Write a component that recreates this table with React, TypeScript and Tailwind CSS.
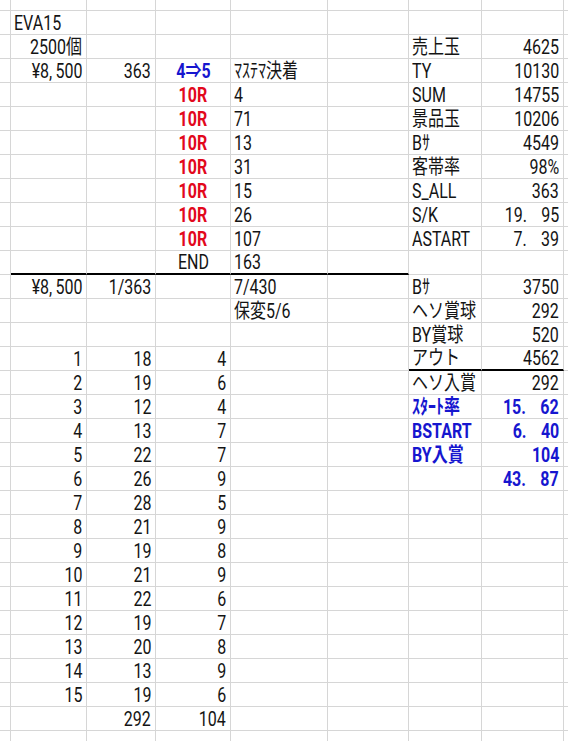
type Tone = "red" | "blue";
type Cell = { t: string; a?: "l" | "r" | "c"; tone?: Tone; thick?: boolean };

// columns: gutter, A..G, tail
const COLS = 9;

const rows: Record<number, Record<number, Cell>> = {
  1: { 1: { t: "EVA15", a: "l" } },
  2: { 1: { t: "2500個" }, 6: { t: "売上玉", a: "l" }, 7: { t: "4625" } },
  3: {
    1: { t: "¥8,500" },
    2: { t: "363" },
    3: { t: "4⇒5", a: "c", tone: "blue" },
    4: { t: "ﾏｽﾃﾏ決着", a: "l" },
    6: { t: "TY", a: "l" },
    7: { t: "10130" },
  },
  4: { 3: { t: "10R", a: "c", tone: "red" }, 4: { t: "4", a: "l" }, 6: { t: "SUM", a: "l" }, 7: { t: "14755" } },
  5: { 3: { t: "10R", a: "c", tone: "red" }, 4: { t: "71", a: "l" }, 6: { t: "景品玉", a: "l" }, 7: { t: "10206" } },
  6: { 3: { t: "10R", a: "c", tone: "red" }, 4: { t: "13", a: "l" }, 6: { t: "Bｻ", a: "l" }, 7: { t: "4549" } },
  7: { 3: { t: "10R", a: "c", tone: "red" }, 4: { t: "31", a: "l" }, 6: { t: "客帯率", a: "l" }, 7: { t: "98%" } },
  8: { 3: { t: "10R", a: "c", tone: "red" }, 4: { t: "15", a: "l" }, 6: { t: "S_ALL", a: "l" }, 7: { t: "363" } },
  9: { 3: { t: "10R", a: "c", tone: "red" }, 4: { t: "26", a: "l" }, 6: { t: "S/K", a: "l" }, 7: { t: "19.95" } },
  10: { 3: { t: "10R", a: "c", tone: "red" }, 4: { t: "107", a: "l" }, 6: { t: "ASTART", a: "l" }, 7: { t: "7.39" } },
  11: {
    1: { t: "", thick: true },
    2: { t: "", thick: true },
    3: { t: "END", a: "c", thick: true },
    4: { t: "163", a: "l", thick: true },
    5: { t: "", thick: true },
  },
  12: { 1: { t: "¥8,500" }, 2: { t: "1/363" }, 4: { t: "7/430", a: "l" }, 6: { t: "Bｻ", a: "l" }, 7: { t: "3750" } },
  13: { 4: { t: "保変5/6", a: "l" }, 6: { t: "ヘソ賞球", a: "l" }, 7: { t: "292" } },
  14: { 6: { t: "BY賞球", a: "l" }, 7: { t: "520" } },
  15: { 6: { t: "アウト", a: "l", thick: true }, 7: { t: "4562", thick: true } },
  16: { 6: { t: "ヘソ入賞", a: "l" }, 7: { t: "292" } },
  17: { 6: { t: "ｽﾀｰﾄ率", a: "l", tone: "blue" }, 7: { t: "15.62", tone: "blue" } },
  18: { 6: { t: "BSTART", a: "l", tone: "blue" }, 7: { t: "6.40", tone: "blue" } },
  19: { 6: { t: "BY入賞", a: "l", tone: "blue" }, 7: { t: "104", tone: "blue" } },
  20: { 7: { t: "43.87", tone: "blue" } },
};

const counts = [
  [18, 4], [19, 6], [12, 4], [13, 7], [22, 7], [26, 9], [28, 5], [21, 9],
  [19, 8], [21, 9], [22, 6], [19, 7], [20, 8], [13, 9], [19, 6],
];
counts.forEach(([b, c], i) => {
  const r = 15 + i;
  rows[r] = { ...(rows[r] || {}), 1: { t: String(i + 1) }, 2: { t: String(b) }, 3: { t: String(c) } };
});
rows[30] = { 2: { t: "292" }, 3: { t: "104" } };

const TOTAL_ROWS = 32;

function CellText({ text }: { text: string }) {
  const m = text.match(/^(.*?)([.,])(.*)$/);
  if (!m) return <>{text}</>;
  return (
    <>
      {m[1]}
      <span className={m[2] === "." ? "pr-[18px]" : "pr-[4px]"}>{m[2]}</span>
      {m[3]}
    </>
  );
}

function SheetCell({ cell }: { cell?: Cell }) {
  const align = cell?.a ?? "r";
  const justify =
    align === "l" ? "justify-start pl-[3px]" : align === "c" ? "justify-center" : "justify-end pr-[4px]";
  const origin = align === "l" ? "origin-left" : align === "c" ? "origin-center" : "origin-right";
  const tone =
    cell?.tone === "red"
      ? "text-[#e2081c] font-bold"
      : cell?.tone === "blue"
      ? "text-[#1616cf] font-bold"
      : "text-[#141414]";
  return (
    <div
      className={`flex items-end whitespace-nowrap border-r border-[#d6d6d6] ${
        cell?.thick ? "border-b-2 border-b-black" : "border-b"
      } ${justify}`}
    >
      {cell?.t ? (
        <span className={`inline-block scale-x-[0.8] pb-[1px] ${origin} ${tone}`}>
          <CellText text={cell.t} />
        </span>
      ) : null}
    </div>
  );
}

export default function App() {
  return (
    <div className="h-[741px] w-[568px] overflow-hidden bg-white font-['Roboto','Noto_Sans_CJK_JP',sans-serif] text-[20px] leading-none">
      <div className="grid grid-cols-[11px_76px_69px_75px_97px_81px_73px_82px_1fr] grid-rows-[11px] auto-rows-[24px]">
        {Array.from({ length: TOTAL_ROWS }).map((_, r) =>
          Array.from({ length: COLS }).map((__, c) => (
            <SheetCell key={`${r}-${c}`} cell={rows[r]?.[c]} />
          ))
        )}
      </div>
    </div>
  );
}
